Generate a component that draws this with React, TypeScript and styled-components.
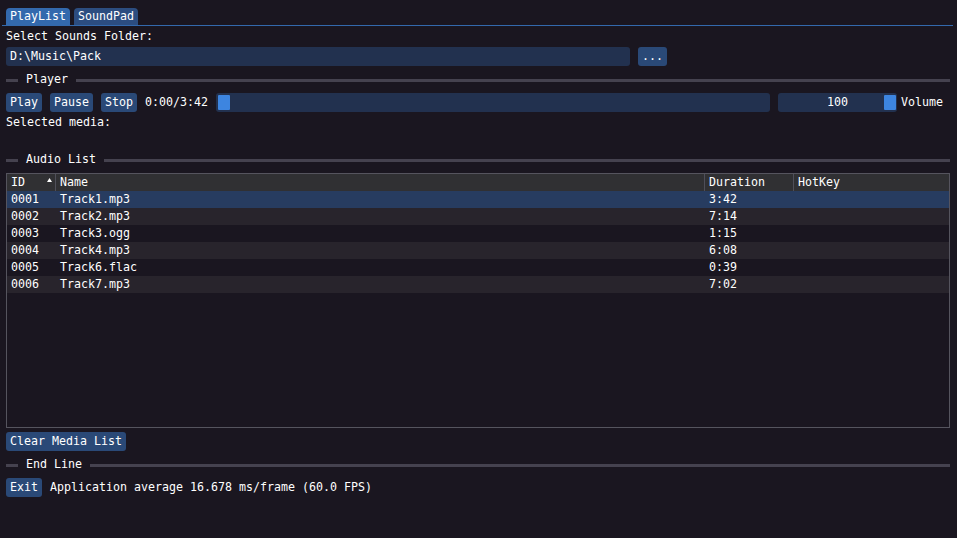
import styled, { createGlobalStyle } from "styled-components";

const GlobalStyle = createGlobalStyle`
  html, body {
    margin: 0;
    padding: 0;
    background: #1a1620;
  }
  body {
    color: #ffffff;
    font-family: "DejaVu Sans Mono", "Liberation Mono", monospace;
    font-size: 11.63px;
    line-height: 13px;
  }
`;

const Window = styled.div`
  width: 957px;
  height: 538px;
  box-sizing: border-box;
  padding: 8px 7px 0 6px;
  display: flex;
  flex-direction: column;
  gap: 4px;
  white-space: pre;
`;

const TabBar = styled.div`
  display: flex;
  gap: 4px;
  margin: 0 -3px 0 -4px;
  padding-left: 4px;
  border-bottom: 1px solid #3369ad;
`;

const Tab = styled.div<{ $active?: boolean }>`
  height: 17px;
  line-height: 17px;
  padding: 0 4px;
  border-radius: 4px 4px 0 0;
  background: ${(p) => (p.$active ? "#3369ad" : "#2c4d80")};
`;

const Label = styled.div`
  height: 13px;
`;

const Row = styled.div`
  display: flex;
  align-items: center;
  height: 19px;
  gap: 8px;
`;

const Frame = styled.div<{ $width?: number }>`
  height: 19px;
  line-height: 19px;
  box-sizing: border-box;
  padding: 0 4px;
  border-radius: 3px;
  background: #22314f;
  width: ${(p) => (p.$width ? `${p.$width}px` : "auto")};
  flex: none;
`;

const Button = styled.div`
  height: 19px;
  line-height: 19px;
  padding: 0 4px;
  border-radius: 3px;
  background: #2a4977;
  flex: none;
`;

const SepWrap = styled.div`
  display: flex;
  align-items: flex-start;
  height: 19px;
`;

const SepLine = styled.div<{ $grow?: boolean }>`
  height: 3px;
  margin-top: 9px;
  background: #45424f;
  width: ${(p) => (p.$grow ? "auto" : "12px")};
  flex: ${(p) => (p.$grow ? 1 : "none")};
`;

const SepText = styled.span`
  margin: 0 8px;
  line-height: 19px;
`;

const SliderFrame = styled.div<{ $width: number }>`
  position: relative;
  width: ${(p) => p.$width}px;
  height: 19px;
  line-height: 19px;
  border-radius: 3px;
  background: #22314f;
  text-align: center;
  flex: none;
`;

const Grab = styled.div`
  position: absolute;
  top: 2px;
  width: 12px;
  height: 15px;
  border-radius: 1px;
  background: #3d85e0;
`;

const InlineText = styled.span`
  margin-left: -4px;
`;

const Table = styled.div`
  height: 255px;
  box-sizing: border-box;
  border: 1px solid #55545e;
  display: flex;
  flex-direction: column;
`;

const TRow = styled.div<{ $kind: "head" | "sel" | "alt" | "plain" }>`
  display: grid;
  grid-template-columns: 48px 649px 89px 1fr;
  height: 17px;
  line-height: 17px;
  background: ${(p) =>
    p.$kind === "head"
      ? "#303033"
      : p.$kind === "sel"
      ? "#273c60"
      : p.$kind === "alt"
      ? "#28242c"
      : "transparent"};
`;

const Cell = styled.div<{ $divider?: boolean; $head?: boolean }>`
  padding-left: 4px;
  border-left: ${(p) =>
    p.$divider ? `1px solid ${p.$head ? "#4f4f59" : "transparent"}` : "none"};
  display: flex;
  align-items: center;
  justify-content: space-between;
  padding-right: 3px;
  overflow: hidden;
`;

const SortArrow = () => (
  <svg width="5" height="4" viewBox="0 0 5 4" style={{ marginTop: -5 }}>
    <polygon points="2.5,0 5,4 0,4" fill="#ffffff" />
  </svg>
);

const Separator = ({ label }: { label: string }) => (
  <SepWrap>
    <SepLine />
    <SepText>{label}</SepText>
    <SepLine $grow />
  </SepWrap>
);

const Slider = ({ width, pos, text }: { width: number; pos: number; text?: string }) => (
  <SliderFrame $width={width}>
    {text}
    <Grab style={{ left: 2 + pos * (width - 15) }} />
  </SliderFrame>
);

const tracks = [
  ["0001", "Track1.mp3", "3:42"],
  ["0002", "Track2.mp3", "7:14"],
  ["0003", "Track3.ogg", "1:15"],
  ["0004", "Track4.mp3", "6:08"],
  ["0005", "Track6.flac", "0:39"],
  ["0006", "Track7.mp3", "7:02"],
];

export default function App() {
  return (
    <>
      <GlobalStyle />
      <Window>
        <TabBar>
          <Tab $active>PlayList</Tab>
          <Tab>SoundPad</Tab>
        </TabBar>
        <Label>Select Sounds Folder:</Label>
        <Row>
          <Frame $width={624}>D:\Music\Pack</Frame>
          <Button>...</Button>
        </Row>
        <Separator label="Player" />
        <Row>
          <Button>Play</Button>
          <Button>Pause</Button>
          <Button>Stop</Button>
          <span>0:00/3:42</span>
          <Slider width={554} pos={0} />
          <Slider width={119} pos={1} text="100" />
          <InlineText>Volume</InlineText>
        </Row>
        <Label>Selected media:</Label>
        <Label />
        <Separator label="Audio List" />
        <Table>
          <TRow $kind="head">
            <Cell $head>
              ID
              <SortArrow />
            </Cell>
            <Cell $head $divider>Name</Cell>
            <Cell $head $divider>Duration</Cell>
            <Cell $head $divider>HotKey</Cell>
          </TRow>
          {tracks.map(([id, name, dur], i) => (
            <TRow key={id} $kind={i === 0 ? "sel" : i % 2 === 1 ? "alt" : "plain"}>
              <Cell>{id}</Cell>
              <Cell $divider>{name}</Cell>
              <Cell $divider>{dur}</Cell>
              <Cell $divider />
            </TRow>
          ))}
        </Table>
        <Row>
          <Button>Clear Media List</Button>
        </Row>
        <Separator label="End Line" />
        <Row>
          <Button>Exit</Button>
          <span>Application average 16.678 ms/frame (60.0 FPS)</span>
        </Row>
      </Window>
    </>
  );
}
